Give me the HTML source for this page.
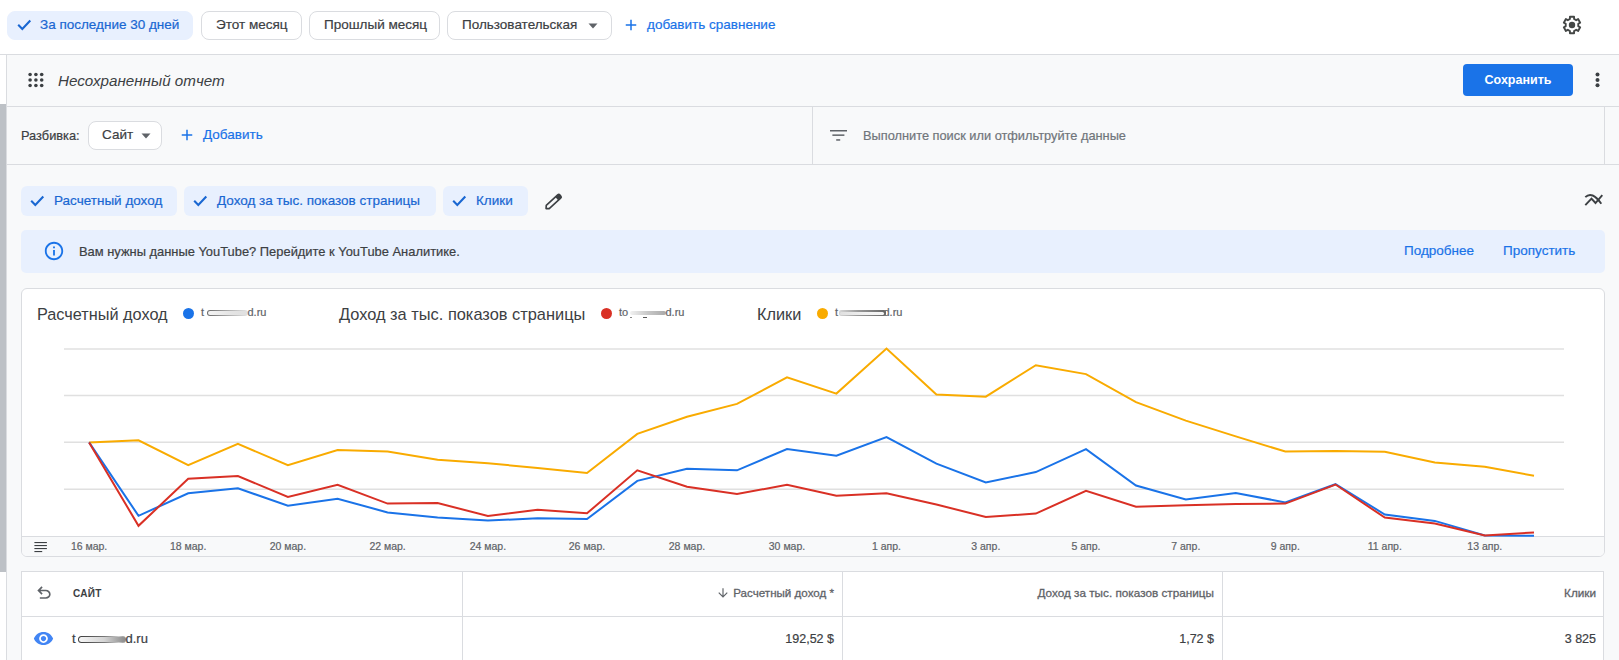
<!DOCTYPE html>
<html><head><meta charset="utf-8">
<style>
*{box-sizing:border-box;margin:0;padding:0}
html,body{width:1619px;height:660px;overflow:hidden;background:#f8f9fa;font-family:"Liberation Sans",sans-serif;color:#3c4043}
.a{position:absolute}
.t{position:absolute;white-space:nowrap;-webkit-text-stroke:0.2px currentColor}
svg{position:absolute;display:block}
#top{position:absolute;left:0;top:0;width:1619px;height:55px;background:#fff;border-bottom:1px solid #dadce0}
.chip{-webkit-text-stroke:0.2px currentColor;position:absolute;top:11px;height:29px;border:1px solid #dadce0;border-radius:8px;background:#fff;font-size:13.5px;line-height:26px;color:#3c4043}
.chip.sel{background:#e8f0fe;border-color:#e8f0fe;color:#1967d2}
.mchip{-webkit-text-stroke:0.2px currentColor;position:absolute;top:186px;height:30px;border-radius:6px;background:#e8f0fe;font-size:13.5px;line-height:29px;color:#1967d2}
.link{color:#1a73e8}
</style></head><body>
<!-- left white strip and line -->
<div class="a" style="left:0;top:55px;width:6px;height:605px;background:#fff"></div>
<div class="a" style="left:6px;top:55px;width:1px;height:605px;background:#dadce0"></div>
<div class="a" style="left:0;top:104px;width:6px;height:468px;background:#bdc1c6"></div>

<div id="top">
  <div class="chip sel" style="left:7px;width:186px">
    <svg style="left:9px;top:6px" width="16" height="14" viewBox="0 0 16 14"><path fill="none" stroke="#1967d2" stroke-width="2.1" d="M1.2 6.8 L5.3 10.9 L13.3 2.6"/></svg>
    <span class="t" style="left:32px;top:0">За последние 30 дней</span>
  </div>
  <div class="chip" style="left:201px;width:101px"><span class="t" style="left:14px;top:0">Этот месяц</span></div>
  <div class="chip" style="left:309px;width:131px"><span class="t" style="left:14px;top:0">Прошлый месяц</span></div>
  <div class="chip" style="left:447px;width:165px"><span class="t" style="left:14px;top:0">Пользовательская</span>
    <svg style="left:140px;top:11px" width="10" height="6" viewBox="0 0 10 6"><path fill="#5f6368" d="M0.5 0.5h9L5 5.5z"/></svg>
  </div>
  <svg style="left:622px;top:16px" width="18" height="18" viewBox="0 0 24 24"><path fill="#1a73e8" d="M19 13h-6v6h-2v-6H5v-2h6V5h2v6h6v2z"/></svg>
  <span class="t link" style="left:647px;top:11px;font-size:13.5px;line-height:27px">добавить сравнение</span>
  <svg style="left:1560px;top:13px" width="24" height="24" viewBox="0 0 24 24"><path fill="none" stroke="#444746" stroke-width="1.9" stroke-linejoin="round" d="M14.08 5.95 L14.06 3.75 L9.94 3.75 L9.92 5.95 L7.80 7.17 L5.89 6.10 L3.83 9.66 L5.72 10.78 L5.72 13.22 L3.83 14.34 L5.89 17.90 L7.80 16.83 L9.92 18.05 L9.94 20.25 L14.06 20.25 L14.08 18.05 L16.20 16.83 L18.11 17.90 L20.17 14.34 L18.28 13.22 L18.28 10.78 L20.17 9.66 L18.11 6.10 L16.20 7.17Z"/><circle cx="12" cy="12" r="3.2" fill="#444746"/></svg>
</div>

<!-- report header row -->
<svg style="left:28px;top:72px" width="16" height="16" viewBox="0 0 16 16" fill="#3c4043"><circle cx="2.1" cy="2.5" r="1.8"/><circle cx="7.9" cy="2.5" r="1.8"/><circle cx="13.7" cy="2.5" r="1.8"/><circle cx="2.1" cy="8" r="1.8"/><circle cx="7.9" cy="8" r="1.8"/><circle cx="13.7" cy="8" r="1.8"/><circle cx="2.1" cy="13.5" r="1.8"/><circle cx="7.9" cy="13.5" r="1.8"/><circle cx="13.7" cy="13.5" r="1.8"/></svg>
<span class="t" style="left:58px;top:71px;font-size:15.2px;line-height:20px;font-style:italic;color:#3c4043;-webkit-text-stroke:0">Несохраненный отчет</span>
<div class="a" style="left:1463px;top:64px;width:110px;height:32px;background:#1a73e8;border-radius:4px"></div>
<span class="t" style="left:1463px;top:64px;width:110px;text-align:center;font-size:12.5px;line-height:32px;font-weight:bold;color:#fff;-webkit-text-stroke:0">Сохранить</span>
<svg style="left:1595px;top:72px" width="5" height="16" viewBox="0 0 5 16" fill="#3c4043"><circle cx="2.5" cy="2.5" r="2"/><circle cx="2.5" cy="8" r="2"/><circle cx="2.5" cy="13.3" r="2"/></svg>
<div class="a" style="left:7px;top:106px;width:1612px;height:1px;background:#dadce0"></div>

<!-- breakdown row -->
<span class="t" style="left:21px;top:126px;font-size:12.8px;line-height:20px;color:#3c4043">Разбивка:</span>
<div class="a" style="left:88px;top:121px;width:74px;height:29px;border:1px solid #dadce0;border-radius:8px;background:#fff"></div>
<span class="t" style="left:102px;top:125px;font-size:13.5px;line-height:20px;color:#3c4043">Сайт</span>
<svg style="left:141px;top:133px" width="10" height="6" viewBox="0 0 10 6"><path fill="#5f6368" d="M0.5 0.5h9L5 5.5z"/></svg>
<svg style="left:178px;top:126px" width="18" height="18" viewBox="0 0 24 24"><path fill="#1a73e8" d="M19 13h-6v6h-2v-6H5v-2h6V5h2v6h6v2z"/></svg>
<span class="t link" style="left:203px;top:125px;font-size:13.5px;line-height:20px">Добавить</span>
<div class="a" style="left:812px;top:107px;width:1px;height:57px;background:#dadce0"></div>
<div class="a" style="left:1604px;top:107px;width:1px;height:57px;background:#dadce0"></div>
<svg style="left:830px;top:129px" width="17" height="12" viewBox="0 0 17 12" fill="#5f6368"><rect x="0" y="1" width="17" height="1.5"/><rect x="2.4" y="5.4" width="12" height="1.5"/><rect x="6.2" y="10.2" width="4" height="1.5"/></svg>
<span class="t" style="left:863px;top:126px;font-size:12.8px;line-height:20px;color:#70757a">Выполните поиск или отфильтруйте данные</span>
<div class="a" style="left:7px;top:164px;width:1612px;height:1px;background:#dadce0"></div>

<!-- metric chips -->
<div class="mchip" style="left:21px;width:156px">
  <svg style="left:9px;top:8px" width="16" height="14" viewBox="0 0 16 14"><path fill="none" stroke="#1967d2" stroke-width="2.1" d="M1.2 6.8 L5.3 10.9 L13.3 2.6"/></svg>
  <span class="t" style="left:33px;top:0">Расчетный доход</span>
</div>
<div class="mchip" style="left:184px;width:252px">
  <svg style="left:9px;top:8px" width="16" height="14" viewBox="0 0 16 14"><path fill="none" stroke="#1967d2" stroke-width="2.1" d="M1.2 6.8 L5.3 10.9 L13.3 2.6"/></svg>
  <span class="t" style="left:33px;top:0">Доход за тыс. показов страницы</span>
</div>
<div class="mchip" style="left:443px;width:85px">
  <svg style="left:9px;top:8px" width="16" height="14" viewBox="0 0 16 14"><path fill="none" stroke="#1967d2" stroke-width="2.1" d="M1.2 6.8 L5.3 10.9 L13.3 2.6"/></svg>
  <span class="t" style="left:33px;top:0">Клики</span>
</div>
<svg style="left:538px;top:186px" width="32" height="30" viewBox="538 186 32 30"><g transform="translate(545.6 209) rotate(-42.5)"><path d="M0.6 0 L2.9 -2.2 L18.4 -2.2 Q20 -2.2 20 -0.6 L20 0.6 Q20 2.2 18.4 2.2 L2.9 2.2 Z" fill="none" stroke="#3c4043" stroke-width="1.6" stroke-linejoin="round"/><rect x="15.2" y="-2.3" width="4.8" height="4.6" rx="1" fill="#3c4043"/></g></svg>
<svg style="left:1580px;top:188px" width="28" height="24" viewBox="1580 188 28 24"><g fill="none" stroke="#3c4043" stroke-width="1.9"><path d="M1585.3 197.2 Q1592 190.5 1601.3 203.8"/><path d="M1585.3 205.2 L1591.5 198.6 L1595.5 203 L1602.3 195.2"/></g></svg>

<!-- info banner -->
<div class="a" style="left:21px;top:230px;width:1584px;height:43px;background:#e8f0fe;border-radius:5px"></div>
<svg style="left:43px;top:240px" width="22" height="22" viewBox="0 0 24 24"><path fill="#1a73e8" d="M11 7h2v2h-2zm0 4h2v6h-2zm1-9C6.48 2 2 6.48 2 12s4.48 10 10 10 10-4.48 10-10S17.52 2 12 2zm0 18c-4.41 0-8-3.59-8-8s3.59-8 8-8 8 3.59 8 8-3.59 8-8 8z"/></svg>
<span class="t" style="left:79px;top:242px;font-size:12.9px;line-height:20px;color:#3c4043">Вам нужны данные YouTube? Перейдите к YouTube Аналитике.</span>
<span class="t link" style="left:1404px;top:241px;font-size:13.5px;line-height:20px">Подробнее</span>
<span class="t link" style="left:1503px;top:241px;font-size:13.5px;line-height:20px">Пропустить</span>

<!-- chart card -->
<div class="a" style="left:21px;top:288px;width:1584px;height:269px;background:#fff;border:1px solid #dadce0;border-radius:6px;overflow:hidden">
  <div class="a" style="left:0;top:247px;width:1582px;height:20px;background:#f8f9fa;border-top:1px solid #dadce0"></div>
</div>
<span class="t" style="left:37px;top:304px;font-size:16.3px;line-height:20px;color:#3c4043;-webkit-text-stroke:0">Расчетный доход</span>
<div class="a" style="left:183px;top:308px;width:11px;height:11px;border-radius:50%;background:#1a73e8"></div>
<span class="t" style="left:339px;top:304px;font-size:16.4px;line-height:20px;color:#3c4043;-webkit-text-stroke:0">Доход за тыс. показов страницы</span>
<div class="a" style="left:601px;top:308px;width:11px;height:11px;border-radius:50%;background:#d93025"></div>
<span class="t" style="left:757px;top:304px;font-size:16.3px;line-height:20px;color:#3c4043;-webkit-text-stroke:0">Клики</span>
<div class="a" style="left:817px;top:308px;width:11px;height:11px;border-radius:50%;background:#f9ab00"></div>

<!-- domains in legend -->
<span class="t" style="left:201px;top:304px;font-size:11px;line-height:16px;color:#5f6368">t</span>
<div class="a" style="left:206.5px;top:310px;width:41px;height:6px;border-radius:3px;background:linear-gradient(90deg,#6a6a6a,#b0b0b0 55%,#e6e6e6)"></div>
<div class="a" style="left:208px;top:311.3px;width:39px;height:3.4px;border-radius:2px;background:linear-gradient(90deg,#f4f4f4,#e4e4e4 60%,#e0e0e0)"></div>
<span class="t" style="left:247.5px;top:304px;font-size:11px;line-height:16px;color:#5f6368">d.ru</span>
<span class="t" style="left:619px;top:304px;font-size:11px;line-height:16px;color:#5f6368">to</span>
<div class="a" style="left:630px;top:311px;width:36px;height:3.5px;border-radius:2px;background:linear-gradient(90deg,#f2f2f2,#c8c8c8 50%,#a9a9a9)"></div>
<div class="a" style="left:630px;top:317px;width:1.5px;height:1.2px;background:#888"></div>
<div class="a" style="left:643px;top:317px;width:4px;height:1.2px;background:#555"></div>
<span class="t" style="left:665.5px;top:304px;font-size:11px;line-height:16px;color:#5f6368">d.ru</span>
<span class="t" style="left:835px;top:304px;font-size:11px;line-height:16px;color:#5f6368">t</span>
<span class="t" style="left:883.5px;top:304px;font-size:11px;line-height:16px;color:#5f6368">d.ru</span>
<div class="a" style="left:838.5px;top:310px;width:47px;height:6px;border-radius:2px;background:linear-gradient(90deg,#d8d8d8,#9a9a9a 40%,#666)"></div>
<div class="a" style="left:839.5px;top:311.5px;width:44.5px;height:3px;border-radius:1.5px;background:linear-gradient(90deg,#e0e0e0,#f2f2f2 60%,#f6f6f6)"></div>

<svg id="chart" style="left:0;top:0" width="1619" height="660" viewBox="0 0 1619 660">
  <g stroke="#e0e0e0" stroke-width="1.5">
    <line x1="64" y1="349" x2="1564" y2="349"/>
    <line x1="64" y1="395.5" x2="1564" y2="395.5"/>
    <line x1="64" y1="442.3" x2="1564" y2="442.3"/>
    <line x1="64" y1="489.2" x2="1564" y2="489.2"/>
  </g>
  <g fill="none" stroke-width="2" stroke-linejoin="miter">
    <polyline id="pY" stroke="#f9ab00" points="89.1,442.4 138.5,440.3 188.2,465.2 237.9,443.9 287.9,465.2 337.6,450.0 387.6,451.5 437.6,459.7 487.9,463.3 537.6,467.9 587.0,473.0 637.3,433.9 687.0,416.7 737.0,403.9 787.0,377.3 836.4,393.6 886.5,348.5 936.4,394.5 985.8,396.7 1035.8,365.2 1086.0,374.1 1136.0,402.1 1185.8,420.6 1235.8,436.4 1285.3,451.5 1335.5,450.9 1384.8,451.8 1434.8,462.4 1484.8,466.7 1534.0,475.8"/>
    <polyline id="pB" stroke="#1a73e8" points="89.1,442.4 138.5,515.8 188.2,493.3 237.9,488.2 287.9,505.8 337.6,498.8 387.6,512.4 437.6,517.6 487.9,520.6 537.6,518.2 587.0,519.1 637.3,480.9 687.0,468.8 737.0,470.3 787.0,449.1 836.4,455.8 886.5,437.0 936.4,463.6 985.8,482.4 1035.8,472.1 1086.0,449.1 1136.0,485.5 1185.8,499.4 1235.8,493.0 1285.3,502.4 1335.5,484.2 1384.8,514.5 1434.8,520.9 1484.8,535.5 1534.0,535.8"/>
    <polyline id="pR" stroke="#d93025" points="89.1,442.4 138.5,525.8 188.2,478.8 237.9,476.0 287.9,497.0 337.6,484.8 387.6,503.6 437.6,503.0 487.9,516.0 537.6,509.7 587.0,513.3 637.3,470.3 687.0,486.7 737.0,494.0 787.0,484.8 836.4,495.8 886.5,493.3 936.4,504.5 985.8,517.0 1035.8,513.6 1086.0,490.9 1136.0,506.7 1185.8,505.2 1235.8,503.9 1285.3,503.6 1335.5,484.5 1384.8,517.6 1434.8,523.6 1484.8,535.5 1534.0,532.4"/>
  </g>
</svg>

<!-- x axis -->
<svg style="left:34px;top:541px" width="14" height="12" viewBox="0 0 14 12" fill="#3c4043"><rect x="0.4" y="1" width="12.5" height="1.1"/><rect x="0.4" y="4" width="12.5" height="1.1"/><rect x="0.4" y="7" width="12.5" height="1.1"/><rect x="0.4" y="10" width="7.8" height="1.1"/></svg>
<div id="xl"><span class="t" style="left:49.1px;top:539px;width:80px;text-align:center;font-size:10.5px;line-height:14px;color:#5f6368">16 мар.</span><span class="t" style="left:148.2px;top:539px;width:80px;text-align:center;font-size:10.5px;line-height:14px;color:#5f6368">18 мар.</span><span class="t" style="left:247.9px;top:539px;width:80px;text-align:center;font-size:10.5px;line-height:14px;color:#5f6368">20 мар.</span><span class="t" style="left:347.6px;top:539px;width:80px;text-align:center;font-size:10.5px;line-height:14px;color:#5f6368">22 мар.</span><span class="t" style="left:447.9px;top:539px;width:80px;text-align:center;font-size:10.5px;line-height:14px;color:#5f6368">24 мар.</span><span class="t" style="left:547.0px;top:539px;width:80px;text-align:center;font-size:10.5px;line-height:14px;color:#5f6368">26 мар.</span><span class="t" style="left:647.0px;top:539px;width:80px;text-align:center;font-size:10.5px;line-height:14px;color:#5f6368">28 мар.</span><span class="t" style="left:747.0px;top:539px;width:80px;text-align:center;font-size:10.5px;line-height:14px;color:#5f6368">30 мар.</span><span class="t" style="left:846.5px;top:539px;width:80px;text-align:center;font-size:10.5px;line-height:14px;color:#5f6368">1 апр.</span><span class="t" style="left:945.8px;top:539px;width:80px;text-align:center;font-size:10.5px;line-height:14px;color:#5f6368">3 апр.</span><span class="t" style="left:1046.0px;top:539px;width:80px;text-align:center;font-size:10.5px;line-height:14px;color:#5f6368">5 апр.</span><span class="t" style="left:1145.8px;top:539px;width:80px;text-align:center;font-size:10.5px;line-height:14px;color:#5f6368">7 апр.</span><span class="t" style="left:1245.3px;top:539px;width:80px;text-align:center;font-size:10.5px;line-height:14px;color:#5f6368">9 апр.</span><span class="t" style="left:1344.8px;top:539px;width:80px;text-align:center;font-size:10.5px;line-height:14px;color:#5f6368">11 апр.</span><span class="t" style="left:1444.8px;top:539px;width:80px;text-align:center;font-size:10.5px;line-height:14px;color:#5f6368">13 апр.</span></div>

<!-- table -->
<div class="a" style="left:21px;top:571px;width:1583px;height:100px;background:#fff;border:1px solid #dadce0"></div>
<div class="a" style="left:22px;top:616px;width:1581px;height:1px;background:#dadce0"></div>
<div class="a" style="left:462px;top:572px;width:1px;height:88px;background:#dadce0"></div>
<div class="a" style="left:842px;top:572px;width:1px;height:88px;background:#dadce0"></div>
<div class="a" style="left:1222px;top:572px;width:1px;height:88px;background:#dadce0"></div>
<svg style="left:34px;top:583px" width="20" height="20" viewBox="0 -960 960 960"><path fill="#5f6368" d="M280-200v-80h284q63 0 109.5-40T720-420q0-60-46.5-100T564-560H312l104 104-56 56-200-200 200-200 56 56-104 104h252q97 0 166.5 63T800-420q0 94-69.5 157T564-200H280Z"/></svg>
<span class="t" style="left:73px;top:587px;font-size:10px;line-height:14px;font-weight:bold;color:#3c4043;letter-spacing:0.25px;-webkit-text-stroke:0">САЙТ</span>
<svg style="left:716px;top:586px" width="14" height="14" viewBox="0 0 24 24"><path fill="#5f6368" d="M20 12l-1.41-1.41L13 16.17V4h-2v12.17l-5.58-5.59L4 12l8 8 8-8z"/></svg>
<span class="t" style="left:600px;top:586px;width:234px;text-align:right;font-size:11.6px;line-height:14px;color:#5f6368;-webkit-text-stroke:0.3px #5f6368">Расчетный доход *</span>
<span class="t" style="left:980px;top:586px;width:234px;text-align:right;font-size:11.75px;line-height:14px;color:#5f6368;-webkit-text-stroke:0.3px #5f6368">Доход за тыс. показов страницы</span>
<span class="t" style="left:1360px;top:586px;width:236px;text-align:right;font-size:11.75px;line-height:14px;color:#5f6368;-webkit-text-stroke:0.3px #5f6368">Клики</span>
<svg style="left:33px;top:628px" width="21" height="21" viewBox="0 0 24 24"><path fill="#4285f4" d="M12 4.5C7 4.5 2.73 7.61 1 12c1.73 4.39 6 7.5 11 7.5s9.27-3.11 11-7.5c-1.73-4.39-6-7.5-11-7.5zM12 17c-2.76 0-5-2.24-5-5s2.24-5 5-5 5 2.24 5 5-2.24 5-5 5zm0-8c-1.66 0-3 1.34-3 3s1.34 3 3 3 3-1.34 3-3-1.34-3-3-3z"/></svg>
<span class="t" style="left:72px;top:630px;font-size:13px;line-height:18px;color:#3c4043">t</span>
<div class="a" style="left:78px;top:635.5px;width:47.5px;height:7.5px;border-radius:4px;background:linear-gradient(90deg,#3a3a3a,#777 55%,#cfcfcf 85%,#888)"></div>
<div class="a" style="left:79.3px;top:636.8px;width:46px;height:4.9px;border-radius:3px;background:linear-gradient(90deg,#f6f6f6,#d4d4d4 55%,#8c8c8c)"></div>
<span class="t" style="left:125.5px;top:630px;font-size:13px;line-height:18px;color:#3c4043">d.ru</span>
<span class="t" style="left:600px;top:630px;width:234px;text-align:right;font-size:12.5px;line-height:18px;color:#3c4043">192,52 $</span>
<span class="t" style="left:980px;top:630px;width:234px;text-align:right;font-size:12.5px;line-height:18px;color:#3c4043">1,72 $</span>
<span class="t" style="left:1360px;top:630px;width:236px;text-align:right;font-size:12.5px;line-height:18px;color:#3c4043">3 825</span>
</body></html>
